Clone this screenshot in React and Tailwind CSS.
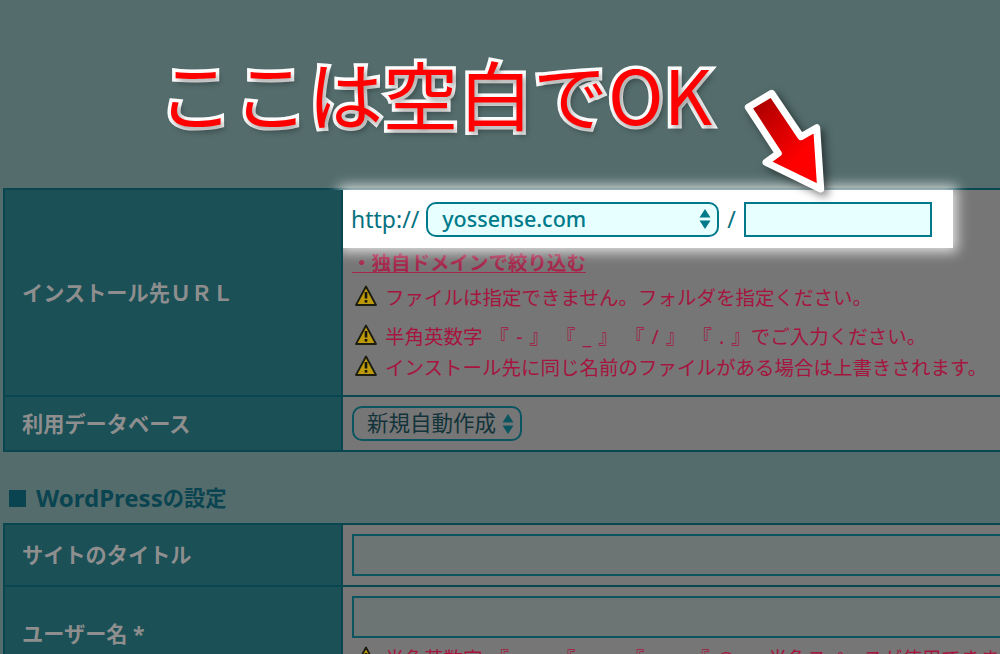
const jp = { fontFamily: '"Noto Sans", "Noto Sans CJK JP", sans-serif' };

const Warn = ({ children, className = "" }) => (
  <div className={`flex items-center text-[19.5px] leading-[26px] text-[#a5153f] whitespace-nowrap [word-spacing:2px] ${className}`}>
    <svg width="22" height="22" viewBox="0 0 22 22" className="ml-[3px] mr-[8px] mb-[4px] shrink-0">
      <path d="M11 1.5 L21 20 H1 Z" fill="#bd9a0c" stroke="#1c1c10" strokeWidth="1.8" strokeLinejoin="round" />
      <path d="M11 7 V13.5" stroke="#16160c" strokeWidth="2.6" />
      <rect x="9.7" y="15" width="2.6" height="2.6" fill="#16160c" />
    </svg>
    {children}
  </div>
);

const SelectArrows = ({ color }) => (
  <svg width="12" height="24" viewBox="0 0 12 24">
    <path d="M6 2 L11.5 10.5 H0.5 Z M6 22 L11.5 13.5 H0.5 Z" fill={color} />
  </svg>
);

const Row = ({ label, height, last, children }) => (
  <div className={`flex border-t-2 border-[#0a4650] ${last ? "border-b-2" : ""}`} style={{ height }}>
    <div className="relative z-20 w-[340px] shrink-0 bg-[#1a5056] border-l-2 border-r-2 border-[#0a4650] flex items-center pl-[17px] text-[21.2px] font-bold text-[#8e8e8e] whitespace-nowrap">
      {label}
    </div>
    <div className="flex-1 bg-[#767676]">{children}</div>
  </div>
);

export default function App() {
  return (
    <div style={jp} className="relative h-[654px] w-[1000px] overflow-hidden bg-[#546c6c]">
      {/* Callout */}
      <div className="h-[188px] pt-[38px] pl-[158px] font-['Noto_Sans_CJK_JP',sans-serif] text-[75px] leading-[110px] font-normal text-[#ff0000] whitespace-nowrap [-webkit-text-stroke:7px_white] [paint-order:stroke_fill] [stroke-linejoin:round] [text-shadow:3px_4px_6px_rgba(0,0,0,0.4)]">
        ここは空白でOK
      </div>

      <svg width="110" height="125" viewBox="730 75 110 125" className="absolute left-[730px] top-[75px] z-30 drop-shadow-[4px_4px_4px_rgba(0,0,0,0.5)]">
        <defs>
          <linearGradient id="arrowFill" x1="0" y1="0" x2="0.8" y2="1">
            <stop offset="0" stopColor="#9c0000" />
            <stop offset="0.75" stopColor="#ff0000" />
          </linearGradient>
        </defs>
        <path
          d="M748.3 107.3 L771.7 93.3 L801 136.7 L816.7 127.7 L820.7 189 L766 162.3 L778.3 153.3 Z"
          fill="url(#arrowFill)"
          stroke="white"
          strokeWidth="7"
          strokeLinejoin="round"
        />
      </svg>

      <div className="ml-[3px] w-[1040px]">
        <Row label={"インストール先\uFF35\uFF32\uFF2C"} height={207}>
          <div className="relative z-10 mb-[2px] flex h-[58px] w-[610px] items-center bg-white pl-[8px] text-[23px] text-[#06717f] shadow-[0_0_12px_4px_rgba(255,255,255,0.8)]">
            <span>http://</span>
            <div className="ml-[7px] flex h-[35px] w-[293px] items-center justify-between rounded-[10px] border-2 border-[#007a8a] bg-[#e8ffff] pl-[14px] pr-[6px] text-[21.5px] font-medium text-[#007a8a]">
              yossense.com
              <SelectArrows color="#007a8a" />
            </div>
            <span className="mx-[8px]">/</span>
            <div className="h-[35px] w-[188px] border-2 border-[#007a8a] bg-[#e8ffff]" />
          </div>
          <div className="mt-[2px] pl-[9px]">
            <div className="text-[19.5px] leading-[26px] font-bold text-[#a5274c] underline underline-offset-2">・独自ドメインで絞り込む</div>
            <Warn className="mt-[9px]">ファイルは指定できません。フォルダを指定ください。</Warn>
            <Warn className="mt-[13px]">半角英数字 『 - 』 『 _ 』 『 / 』 『 . 』でご入力ください。</Warn>
            <Warn className="mt-[5px]">インストール先に同じ名前のファイルがある場合は上書きされます。</Warn>
          </div>
        </Row>
        <Row label="利用データベース" height={57} last>
          <div className="ml-[9px] mt-[9px] flex h-[35px] w-[170px] items-center justify-between rounded-[10px] border-2 border-[#0a5560] pl-[13px] pr-[6px] text-[21.5px] text-[#12333a]">
            新規自動作成
            <SelectArrows color="#0a5560" />
          </div>
        </Row>

        <div className="ml-[6px] mt-[33px] mb-[12px] flex h-[26px] items-center text-[21.3px] font-bold text-[#0a4450] whitespace-nowrap">
          <span className="mr-[10px] h-[17px] w-[17px] bg-[#0a4450]" />
          <span className="text-[24px]">WordPress</span>の設定
        </div>

        <Row label="サイトのタイトル" height={62}>
          <div className="ml-[9px] mt-[9px] h-[42px] border-2 border-[#0a5560] bg-[#6c7474]" />
        </Row>
        <Row label="ユーザー名 *" height={96}>
          <div className="ml-[9px] mt-[9px] h-[42px] border-2 border-[#0a5560] bg-[#6c7474]" />
          <div className="pl-[9px] mt-[8px]">
            <Warn>半角英数字 『 - 』 『 _ 』 『 . 』 『 @ 』 半角スペースが使用できます。</Warn>
          </div>
        </Row>
      </div>
    </div>
  );
}
